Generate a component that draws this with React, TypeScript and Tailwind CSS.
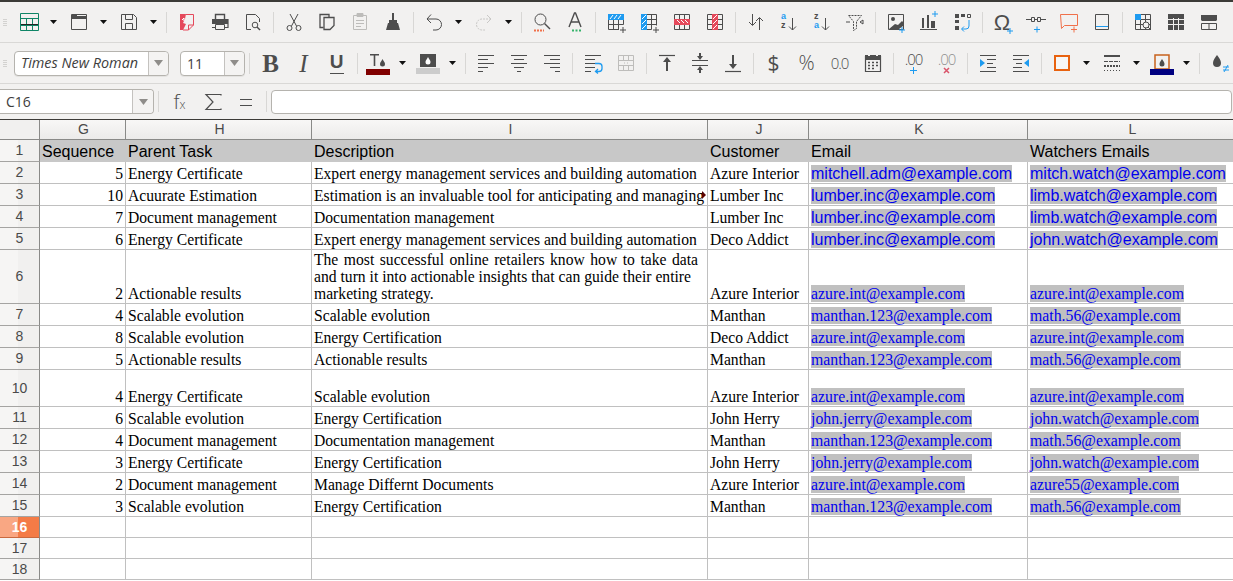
import type { ReactNode } from 'react';

const DARK = '#4d4d4d';
const BLUE = '#1e9bf0';
const RED = '#e5495b';
const ORANGE = '#f0704a';

function Ic({ children }: { children: ReactNode }) {
  return (
    <svg width="24" height="24" viewBox="0 0 24 24" fill="none" stroke={DARK} strokeWidth="1">
      {children}
    </svg>
  );
}

function Tool({ children }: { children?: ReactNode }) {
  return <div className="flex h-full w-[33px] shrink-0 items-center justify-center">{children}</div>;
}

function Drop() {
  return (
    <div className="flex h-full w-[17px] shrink-0 items-center justify-center">
      <svg width="7" height="4" viewBox="0 0 7 4">
        <path d="M0 0h7L3.500 4z" fill="#111" />
      </svg>
    </div>
  );
}

function Sep() {
  return (
    <div className="flex h-full w-[8px] shrink-0 items-center justify-center">
      <div className="h-[21px] w-px bg-[#d8d7d5]" />
    </div>
  );
}

function Handle() {
  return (
    <div className="flex h-full w-[12px] shrink-0 flex-col items-start justify-center gap-[1px] pl-[3px]">
      <div className="h-[1px] w-[4px] bg-[#d3d2d0]" />
      <div className="h-[1px] w-[4px] bg-[#d3d2d0]" />
      <div className="h-[1px] w-[4px] bg-[#d3d2d0]" />
      <div className="h-[1px] w-[4px] bg-[#d3d2d0]" />
    </div>
  );
}

function ComboArrow({ width }: { width: string }) {
  return (
    <div className={`flex h-full shrink-0 items-center justify-center rounded-r-[4px] border-l border-[#c4c2bf] bg-[#f4f3f2] ${width}`}>
      <svg width="9" height="6" viewBox="0 0 9 6">
        <path d="M0 0h9L4.500 6z" fill="#8f8d8a" />
      </svg>
    </div>
  );
}

/* table grid used by the insert/delete icons */
function TableLines({ color = DARK }: { color?: string }) {
  return <path d="M4.500 4.500h15v15h-15zM4.500 9.500h15M4.500 14.500h15M9.500 4.500v15M14.500 4.500v15" stroke={color} />;
}

const icons: Record<string, ReactNode> = {
  sheet: (
    <Ic>
      <path d="M3.500 3.500h18v17h-18zM3.500 8.500h18M9.500 8.500v12M15.500 8.500v12" stroke="#0f8566" />
      <path d="M4 14.500h17" stroke="#222" />
      <path d="M3.500 15.500h18" stroke="#0f8566" />
    </Ic>
  ),
  open: (
    <Ic>
      <path d="M4.500 4.500h15v15h-15z" />
      <path d="M5 4h5v2h10v3H5z" fill={DARK} stroke="none" />
    </Ic>
  ),
  save: (
    <Ic>
      <path d="M4.500 4.500h12l3 3v12h-15zM8.500 4.500v5h7v-5M8.500 19.500v-6h7v6" />
    </Ic>
  ),
  pdf: (
    <Ic>
      <path d="M5 4h6l-1 5-2 4 3 1-3 6H5z" fill={RED} stroke="none" />
      <path d="M11 4.500h7.500v10.500l-5 5H8" stroke={RED} />
      <path d="M13.500 20v-5h5" stroke={RED} />
      <path d="M7 10l2-2v3" stroke="#fff" />
    </Ic>
  ),
  print: (
    <Ic>
      <path d="M7.500 9V4.500h9V9" strokeWidth="1.400" />
      <path d="M4 9.500h16v8h-3.500M7.500 17.500H4z" strokeWidth="1.200" />
      <path d="M4 10h16v4H4z" fill={DARK} stroke="none" />
      <path d="M7.500 14.500h9v5h-9z" />
    </Ic>
  ),
  preview: (
    <Ic>
      <path d="M10 19.500H5.500v-15h9l4 4V12" />
      <circle cx="14" cy="15" r="2.800" />
      <path d="M16 17l3 3" strokeWidth="1.400" />
    </Ic>
  ),
  cut: (
    <Ic>
      <path d="M8 4l6.500 12M16 4L9.500 16" />
      <circle cx="7.500" cy="18" r="2.500" />
      <circle cx="16.500" cy="18" r="2.500" />
    </Ic>
  ),
  copy: (
    <Ic>
      <path d="M8.500 17.500h-3.500v-13h9v2.500" strokeWidth="1.300" />
      <path d="M9 7.500h10v8l-4 4H9z" strokeWidth="1.300" />
    </Ic>
  ),
  paste: (
    <Ic>
      <path d="M5.500 5.500h13v14h-13z" stroke="#bdbcba" />
      <path d="M9 3.500h6v3H9z" fill="#bdbcba" stroke="#bdbcba" />
      <path d="M8 10.500h8M8 13.500h8M8 16.500h5" stroke="#bdbcba" />
    </Ic>
  ),
  clone: (
    <Ic>
      <path d="M12 3v7" strokeWidth="2" />
      <path d="M8 10h8v3H8z" fill={DARK} stroke="none" />
      <path d="M7 13h10l2 7H5z" fill={DARK} stroke="none" />
    </Ic>
  ),
  undo: (
    <Ic>
      <path d="M5 9h9a5 5 0 0 1 0 11h-3" />
      <path d="M9 4.500L5 9l4 4" />
    </Ic>
  ),
  redo: (
    <Ic>
      <path d="M19 9h-9a5 5 0 0 0 0 11h3" stroke="#c9c8c6" strokeDasharray="2 1" />
      <path d="M15 5l4 4-4 4" stroke="#c9c8c6" />
    </Ic>
  ),
  find: (
    <Ic>
      <circle cx="10.500" cy="9.500" r="5.500" />
      <path d="M14.500 13.500L20 19" strokeWidth="1.400" />
      <path d="M4 20.500h10" stroke={ORANGE} strokeWidth="2" strokeDasharray="2 1" />
    </Ic>
  ),
  spell: (
    <Ic>
      <path d="M6 17L11.500 3h1L18 17M8 12h8" strokeWidth="1.400" />
      <path d="M9 20.500h9" stroke="#35b36a" strokeWidth="2" strokeDasharray="2 1.500" />
    </Ic>
  ),
  rowIns: (
    <Ic>
      <path d="M4.500 4.500h15v10M4.500 4.500v15h10M4.500 14.500h15M9.500 10v10M14.500 10v10" />
      <path d="M4 4h16v6H4z" fill={BLUE} stroke="none" />
      <path d="M6 9l3-4M10 9l3-4M14 9l3-4" stroke="#fff" />
      <path d="M16 20h6M19 17v6" />
    </Ic>
  ),
  colIns: (
    <Ic>
      <path d="M4.500 4.500h15v11M4.500 19.500h10M9.500 9.500h10M9.500 14.500h10M14.500 4.500v15" />
      <path d="M4 4h6v16H4z" fill={BLUE} stroke="none" />
      <path d="M5 9l4-4M5 14l4-4M5 19l4-4" stroke="#fff" />
      <path d="M16 20h6M19 17v6" />
    </Ic>
  ),
  rowDel: (
    <Ic>
      <TableLines />
      <path d="M4 9h16v6H4z" fill={RED} stroke="none" />
      <path d="M7 10l3 3M11 10l3 3M15 10l3 3" stroke="#fff" />
    </Ic>
  ),
  colDel: (
    <Ic>
      <TableLines />
      <path d="M9 4h6v16H9z" fill={RED} stroke="none" />
      <path d="M10 9l4-4M10 14l4-4M10 19l4-4" stroke="#fff" />
    </Ic>
  ),
  sort: (
    <Ic>
      <path d="M8.500 4v11M5 12l3.500 3.500L12 12M15.500 20V8M12 11l3.500-3.500L19 11" />
    </Ic>
  ),
  sortAsc: (
    <Ic>
      <text x="4" y="9" fontFamily="Liberation Sans, sans-serif" fontSize="9" fontWeight="700" fill={BLUE} stroke="none">a</text>
      <text x="4" y="18" fontFamily="Liberation Sans, sans-serif" fontSize="9" fontWeight="700" fill={DARK} stroke="none">z</text>
      <path d="M15.500 8v12M12 16.500l3.500 3.500 3.500-3.500" />
    </Ic>
  ),
  sortDesc: (
    <Ic>
      <text x="4" y="9" fontFamily="Liberation Sans, sans-serif" fontSize="9" fontWeight="700" fill={DARK} stroke="none">z</text>
      <text x="4" y="18" fontFamily="Liberation Sans, sans-serif" fontSize="9" fontWeight="700" fill={BLUE} stroke="none">a</text>
      <path d="M15.500 8v12M12 16.500l3.500 3.500 3.500-3.500" />
    </Ic>
  ),
  filter: (
    <Ic>
      <path d="M5.500 5.500h13l-5 6v7l-3 2v-9z" strokeDasharray="2 1" />
      <path d="M3 12h4M17 12l3-2v4z" />
    </Ic>
  ),
  image: (
    <Ic>
      <path d="M4.500 4.500h15v15h-15z" />
      <circle cx="9" cy="9" r="2" fill={DARK} stroke="none" />
      <path d="M5 19l6-5 3 1 4-4 1 1v4l-4 3z" fill={DARK} stroke="none" />
      <path d="M15 20h6M18 17v6" stroke={BLUE} />
    </Ic>
  ),
  chart: (
    <Ic>
      <path d="M5 8h2v10H5zM10 5h2v13h-2zM14 11h4v7h-4z" fill={DARK} stroke="none" />
      <path d="M3 19.500h17" />
      <path d="M15 4h6M18 1v6" stroke={BLUE} />
    </Ic>
  ),
  pivot: (
    <Ic>
      <path d="M5 4h4v4H5zM5 16h4v4H5zM5 10h4v3H5z" fill={DARK} stroke="none" />
      <path d="M11 4h4v3h-4z" fill={DARK} stroke="none" />
      <path d="M17.500 4.500h3v3h-3z" />
      <path d="M19 10v6a3 3 0 0 1-3 3h-4M14 16.500L11.500 19l2.500 2.500" stroke={BLUE} />
    </Ic>
  ),
  omega: (
    <Ic>
      <text x="11" y="20" textAnchor="middle" fontFamily="Liberation Sans, sans-serif" fontSize="22" fill={DARK} stroke="none">Ω</text>
      <path d="M16 21h6M19 18v6" stroke={BLUE} />
    </Ic>
  ),
  link: (
    <Ic>
      <path d="M2 9.500h5M17 9.500h5M7.500 7.500h3v4h-3zM13.500 7.500h3v4h-3zM10 9.500h4" />
      <path d="M10 19.500h6M13 16.500v6" stroke={BLUE} />
    </Ic>
  ),
  note: (
    <Ic>
      <path d="M3.500 4.500h17v11h-13l-3 3z" stroke={ORANGE} />
      <path d="M14 19.500h6M17 16.500v6" stroke={ORANGE} />
    </Ic>
  ),
  headerFooter: (
    <Ic>
      <path d="M5.500 4.500h13v15h-13z" />
      <path d="M6 16.500h12" stroke={BLUE} />
    </Ic>
  ),
  pivotFind: (
    <Ic>
      <path d="M4.500 4.500h15v15h-15zM4.500 9.500h15M4.500 14.500h15M9.500 4.500v15M14.500 4.500v15" />
      <path d="M4 4h6v6H4z" fill={BLUE} stroke="none" />
      <circle cx="15" cy="15" r="3" fill="#f2f1f0" />
      <path d="M17 17l3 3" />
    </Ic>
  ),
  grid: (
    <Ic>
      <path d="M4 4h16v16H4z" fill={DARK} stroke="none" />
      <path d="M9.500 8v12M14.500 8v12M4 9.500h16M4 14.500h16" stroke="#f2f1f0" />
    </Ic>
  ),
  split: (
    <Ic>
      <path d="M4 5h16v5H4z" fill={DARK} stroke="none" />
      <path d="M4.500 13.500h15v6h-15zM12 13.500v6M4.500 10.500h15" />
    </Ic>
  ),
  fontColor: (
    <Ic>
      <path d="M4 3h9v1.500H9.300V15H7.700V4.500H4z" fill={DARK} stroke="none" />
      <path d="M16.500 8c1 2 2.500 3.500 2.500 5a2.500 2.500 0 0 1-5 0c0-1.500 1.500-3 2.500-5z" fill={DARK} stroke="none" />
      <path d="M0 18h24v6H0z" fill="#800000" stroke="none" />
    </Ic>
  ),
  background: (
    <Ic>
      <path d="M4 3h16v13H4z" fill={DARK} stroke="none" />
      <path d="M12 6c1 2 2.500 3.500 2.500 5a2.500 2.500 0 0 1-5 0c0-1.500 1.500-3 2.500-5z" fill="#fff" stroke="none" />
      <path d="M0 17h24v6H0z" fill="#cccccc" stroke="none" />
    </Ic>
  ),
  alignLeft: (
    <Ic>
      <path d="M4 4.500h16M4 8.500h10M4 12.500h16M4 16.500h10M4 20.500h5" />
    </Ic>
  ),
  alignCenter: (
    <Ic>
      <path d="M4 4.500h16M7 8.500h10M4 12.500h16M7 16.500h10M10 20.500h4" />
    </Ic>
  ),
  alignRight: (
    <Ic>
      <path d="M4 4.500h16M10 8.500h10M4 12.500h16M10 16.500h10M15 20.500h5" />
    </Ic>
  ),
  wrap: (
    <Ic>
      <path d="M4 4.500h16M4 8.500h10M4 12.500h10M4 16.500h10M4 20.500h6" />
      <path d="M14 12.500h4a3 3 0 0 1 3 3v2a3 3 0 0 1-3 3h-3M17 18l-2.500 2.500 2.500 2" stroke={BLUE} strokeWidth="1.300" />
    </Ic>
  ),
  merge: (
    <Ic>
      <path d="M4.500 4.500h15v15h-15zM4.500 9.500h15M4.500 14.500h15M9.500 4.500v5M14.500 4.500v5M9.500 14.500v5M14.500 14.500v5M10 12h1M13 12h1" stroke="#bebdbb" />
    </Ic>
  ),
  alignTop: (
    <Ic>
      <path d="M4 4.500h16" strokeWidth="1.200" />
      <path d="M12 6l4 5h-3v9h-2v-9H8z" fill={DARK} stroke="none" />
    </Ic>
  ),
  alignMiddle: (
    <Ic>
      <path d="M4 9.500h16M4 14.500h16" />
      <path d="M12 9L9 5h2V2h2v3h2zM12 15l3 4h-2v3h-2v-3H9z" fill={DARK} stroke="none" />
    </Ic>
  ),
  alignBottom: (
    <Ic>
      <path d="M4 20.500h16" strokeWidth="1.200" />
      <path d="M12 18l-4-5h3V4h2v9h3z" fill={DARK} stroke="none" />
    </Ic>
  ),
  date: (
    <Ic>
      <path d="M4.500 5.500h15v15h-15z" strokeWidth="1.200" />
      <path d="M4 4h3v2h2V4h6v2h2V4h3v5H4z" fill={DARK} stroke="none" />
      <path d="M7 11.500h2M11 11.500h2M15 11.500h2M7 14.500h2M11 14.500h2M15 14.500h2M7 17.500h2M11 17.500h2" strokeWidth="1.600" />
    </Ic>
  ),
  indent: (
    <Ic>
      <path d="M4 4.500h16M11 8.500h9M11 12.500h6M11 16.500h9M4 20.500h16M18 20.500h2" />
      <path d="M4 8v8l5-4z" fill={BLUE} stroke="none" />
    </Ic>
  ),
  outdent: (
    <Ic>
      <path d="M4 4.500h16M4 8.500h9M7 12.500h6M4 16.500h9M4 20.500h16" />
      <path d="M20 8v8l-5-4z" fill={BLUE} stroke="none" />
    </Ic>
  ),
  border: (
    <Ic>
      <path d="M5 5h14v14H5z" stroke="#e8620f" strokeWidth="2" />
      <path d="M6 6h12v12H6z" fill="#f7f6f5" stroke="none" />
    </Ic>
  ),
  borderStyle: (
    <Ic>
      <path d="M4 5h16" strokeWidth="2" />
      <path d="M4 10.500h16" strokeWidth="1" strokeDasharray="4 1" />
      <path d="M4 15h16" strokeWidth="2" strokeDasharray="2 1" />
      <path d="M4 19.500h16" strokeDasharray="1 2" />
    </Ic>
  ),
  borderColor: (
    <Ic>
      <path d="M5 4h14v14H5z" stroke="#c8611d" strokeWidth="1.500" />
      <path d="M12 8c1 2 2.500 3 2.500 5a2.500 2.500 0 0 1-5 0c0-2 1.500-3 2.500-5z" fill={DARK} stroke="none" />
      <path d="M0 18h24v6H0z" fill="#000080" stroke="none" />
    </Ic>
  ),
  conditional: (
    <Ic>
      <path d="M9 4c2 3 4 5 4 8a4 4 0 0 1-8 0c0-3 2-5 4-8z" fill={DARK} stroke="none" />
      <path d="M15 16h6M15 19h6M20 14l-4 7" stroke={BLUE} />
    </Ic>
  ),
  sigma: (
    <Ic>
      <path d="M20 5.500V4.500H5l7 7.500-7 7.500h15v-1" strokeWidth="1.200" />
    </Ic>
  ),
  equals: (
    <Ic>
      <path d="M6 9.500h12M6 15.500h12" strokeWidth="1.200" />
    </Ic>
  ),
};

function Glyph({ className, children }: { className: string; children: ReactNode }) {
  return <span className={`leading-none text-[#4d4d4d] ${className}`}>{children}</span>;
}

function TopToolbar() {
  return (
    <div className="flex h-[41px] items-center border-b border-[#d9d8d6]">
      <Handle />
      <Tool>{icons.sheet}</Tool>
      <Drop />
      <Tool>{icons.open}</Tool>
      <Drop />
      <Tool>{icons.save}</Tool>
      <Drop />
      <Sep />
      <Tool>{icons.pdf}</Tool>
      <Tool>{icons.print}</Tool>
      <Tool>{icons.preview}</Tool>
      <Sep />
      <Tool>{icons.cut}</Tool>
      <Tool>{icons.copy}</Tool>
      <Tool>{icons.paste}</Tool>
      <Tool>{icons.clone}</Tool>
      <Sep />
      <Tool>{icons.undo}</Tool>
      <Drop />
      <Tool>{icons.redo}</Tool>
      <Drop />
      <Sep />
      <Tool>{icons.find}</Tool>
      <Tool>{icons.spell}</Tool>
      <Sep />
      <Tool>{icons.rowIns}</Tool>
      <Tool>{icons.colIns}</Tool>
      <Tool>{icons.rowDel}</Tool>
      <Tool>{icons.colDel}</Tool>
      <Sep />
      <Tool>{icons.sort}</Tool>
      <Tool>{icons.sortAsc}</Tool>
      <Tool>{icons.sortDesc}</Tool>
      <Tool>{icons.filter}</Tool>
      <Sep />
      <Tool>{icons.image}</Tool>
      <Tool>{icons.chart}</Tool>
      <Tool>{icons.pivot}</Tool>
      <Sep />
      <Tool>{icons.omega}</Tool>
      <Tool>{icons.link}</Tool>
      <Tool>{icons.note}</Tool>
      <Tool>{icons.headerFooter}</Tool>
      <Sep />
      <Tool>{icons.pivotFind}</Tool>
      <Tool>{icons.grid}</Tool>
      <Tool>{icons.split}</Tool>
    </div>
  );
}

function FormatToolbar() {
  return (
    <div className="flex h-[41px] items-center overflow-hidden border-b border-[#d9d8d6]">
      <Handle />
      <div className="ml-[2px] flex h-[25px] w-[155px] shrink-0 items-center rounded-[4px] border border-[#b5b3ae] bg-white shadow-[0_1px_0_#e4e3e1]">
        <span className="flex-1 truncate pl-[6px] font-['Open_Sans',sans-serif] text-[14.4px] italic text-[#3d3d3d]">Times New Roman</span>
        <ComboArrow width="w-[20px]" />
      </div>
      <div className="ml-[11px] flex h-[25px] w-[65px] shrink-0 items-center rounded-[4px] border border-[#b5b3ae] bg-white shadow-[0_1px_0_#e4e3e1]">
        <span className="flex-1 pl-[6px] font-['Open_Sans',sans-serif] text-[14px] text-[#3d3d3d]">11</span>
        <ComboArrow width="w-[20px]" />
      </div>
      <div className="flex h-full w-[9px] shrink-0 items-center justify-center">
        <div className="h-[21px] w-px bg-[#d8d7d5]" />
      </div>
      <Tool><Glyph className="font-['Liberation_Serif',serif] text-[25px] font-bold">B</Glyph></Tool>
      <Tool><Glyph className="font-['Liberation_Serif',serif] text-[25px] italic">I</Glyph></Tool>
      <Tool>
        <div className="flex flex-col items-center">
          <Glyph className="font-['Liberation_Sans',sans-serif] text-[19px] font-bold">U</Glyph>
          <div className="mt-[2px] h-px w-[14px] bg-[#4d4d4d]" />
        </div>
      </Tool>
      <Sep />
      <Tool>{icons.fontColor}</Tool>
      <Drop />
      <Tool>{icons.background}</Tool>
      <Drop />
      <Sep />
      <Tool>{icons.alignLeft}</Tool>
      <Tool>{icons.alignCenter}</Tool>
      <Tool>{icons.alignRight}</Tool>
      <Sep />
      <Tool>{icons.wrap}</Tool>
      <Tool>{icons.merge}</Tool>
      <Sep />
      <Tool>{icons.alignTop}</Tool>
      <Tool>{icons.alignMiddle}</Tool>
      <Tool>{icons.alignBottom}</Tool>
      <Sep />
      <Tool><Glyph className="font-['Open_Sans',sans-serif] text-[21px]">$</Glyph></Tool>
      <Tool><Glyph className="font-['Open_Sans',sans-serif] text-[20px] font-light">%</Glyph></Tool>
      <Tool><Glyph className="font-['Open_Sans',sans-serif] text-[15px] font-light tracking-[-1px]">0.0</Glyph></Tool>
      <Tool>{icons.date}</Tool>
      <Sep />
      <Tool>
        <div className="flex flex-col items-center">
          <Glyph className="font-['Open_Sans',sans-serif] text-[15px] font-light tracking-[-1px]">.00</Glyph>
          <svg width="7" height="7" viewBox="0 0 7 7" stroke={BLUE}>
            <path d="M0 3.500h7M3.500 0v7" />
          </svg>
        </div>
      </Tool>
      <Tool>
        <div className="flex flex-col items-center">
          <Glyph className="font-['Open_Sans',sans-serif] text-[15px] font-light tracking-[-1px] opacity-60">.00</Glyph>
          <svg width="7" height="7" viewBox="0 0 7 7" stroke="#d9546a" strokeWidth="1.500">
            <path d="M1 1l5 5M6 1L1 6" />
          </svg>
        </div>
      </Tool>
      <Sep />
      <Tool>{icons.indent}</Tool>
      <Tool>{icons.outdent}</Tool>
      <Sep />
      <Tool>{icons.border}</Tool>
      <Drop />
      <Tool>{icons.borderStyle}</Tool>
      <Drop />
      <Tool>{icons.borderColor}</Tool>
      <Drop />
      <Sep />
      <Tool>{icons.conditional}</Tool>
    </div>
  );
}

function FormulaBar() {
  return (
    <div className="flex h-[36px] items-center border-b border-[#3c3b37]">
      <div className="flex h-[25px] w-[154px] shrink-0 items-center rounded-r-[4px] border border-l-0 border-[#b5b3ae] bg-white">
        <span className="flex-1 pl-[6px] font-['Open_Sans',sans-serif] text-[14px] text-[#3d3d3d]">C16</span>
        <ComboArrow width="w-[21px]" />
      </div>
      <div className="flex h-full w-[9px] shrink-0 items-center justify-center">
        <div className="h-[21px] w-px bg-[#d8d7d5]" />
      </div>
      <Tool>
        <span className="font-['Open_Sans',sans-serif] text-[20px] leading-none font-light text-[#4d4d4d]">f<span className="text-[12px]">x</span></span>
      </Tool>
      <Tool>{icons.sigma}</Tool>
      <Tool>{icons.equals}</Tool>
      <Sep />
      <div className="ml-px h-[24px] w-[961px] shrink-0 rounded-[4px] border border-[#b5b3ae] bg-white" />
    </div>
  );
}

type Row = {
  n: number;
  h: string;
  seq?: string;
  task?: string;
  desc?: ReactNode;
  customer?: string;
  email?: string;
  watch?: string;
  big?: boolean;
};

const rows: Row[] = [
  { n: 2, h: 'h-[22px]', seq: '5', task: 'Energy Certificate', desc: 'Expert energy management services and building automation', customer: 'Azure Interior', email: 'mitchell.adm@example.com', watch: 'mitch.watch@example.com', big: true },
  { n: 3, h: 'h-[22px]', seq: '10', task: 'Acuurate Estimation', desc: 'Estimation is an invaluable tool for anticipating and managing', customer: 'Lumber Inc', email: 'lumber.inc@example.com', watch: 'limb.watch@example.com', big: true },
  { n: 4, h: 'h-[22px]', seq: '7', task: 'Document management', desc: 'Documentation management', customer: 'Lumber Inc', email: 'lumber.inc@example.com', watch: 'limb.watch@example.com', big: true },
  { n: 5, h: 'h-[22px]', seq: '6', task: 'Energy Certificate', desc: 'Expert energy management services and building automation', customer: 'Deco Addict', email: 'lumber.inc@example.com', watch: 'john.watch@example.com', big: true },
  {
    n: 6,
    h: 'h-[54px]',
    seq: '2',
    task: 'Actionable results',
    desc: (
      <>
        <span className="[word-spacing:1.6px]">The most successful online retailers know how to take data</span>
        <br />
        and turn it into actionable insights that can guide their entire
        <br />
        marketing strategy.
      </>
    ),
    customer: 'Azure Interior',
    email: 'azure.int@example.com',
    watch: 'azure.int@example.com',
  },
  { n: 7, h: 'h-[22px]', seq: '4', task: 'Scalable evolution', desc: 'Scalable evolution', customer: 'Manthan', email: 'manthan.123@example.com', watch: 'math.56@example.com' },
  { n: 8, h: 'h-[22px]', seq: '8', task: 'Scalable evolution', desc: 'Energy Certification', customer: 'Deco Addict', email: 'azure.int@example.com', watch: 'azure.int@example.com' },
  { n: 9, h: 'h-[22px]', seq: '5', task: 'Actionable results', desc: 'Actionable results', customer: 'Manthan', email: 'manthan.123@example.com', watch: 'math.56@example.com' },
  { n: 10, h: 'h-[37px]', seq: '4', task: 'Energy Certificate', desc: 'Scalable evolution', customer: 'Azure Interior', email: 'azure.int@example.com', watch: 'azure.int@example.com' },
  { n: 11, h: 'h-[22px]', seq: '6', task: 'Scalable evolution', desc: 'Energy Certification', customer: 'John Herry', email: 'john.jerry@example.com', watch: 'john.watch@example.com' },
  { n: 12, h: 'h-[22px]', seq: '4', task: 'Document management', desc: 'Documentation management', customer: 'Manthan', email: 'manthan.123@example.com', watch: 'math.56@example.com' },
  { n: 13, h: 'h-[22px]', seq: '3', task: 'Energy Certificate', desc: 'Energy Certification', customer: 'John Herry', email: 'john.jerry@example.com', watch: 'john.watch@example.com' },
  { n: 14, h: 'h-[22px]', seq: '2', task: 'Document management', desc: 'Manage Differnt Documents', customer: 'Azure Interior', email: 'azure.int@example.com', watch: 'azure55@example.com' },
  { n: 15, h: 'h-[22px]', seq: '3', task: 'Scalable evolution', desc: 'Energy Certification', customer: 'Manthan', email: 'manthan.123@example.com', watch: 'math.56@example.com' },
  { n: 16, h: 'h-[21px]' },
  { n: 17, h: 'h-[21px]' },
  { n: 18, h: 'h-[21px]' },
];

const colW = ['w-[86px]', 'w-[186px]', 'w-[396px]', 'w-[101px]', 'w-[219px]', 'w-[208px]'];
const colNames = ['G', 'H', 'I', 'J', 'K', 'L'];
const headings = ['Sequence', 'Parent Task', 'Description', 'Customer', 'Email', 'Watchers Emails'];

function RowHead({ n, h }: { n: number; h: string }) {
  const active = n === 16;
  return (
    <div className={`relative flex w-[40px] shrink-0 items-center justify-center border-r border-b border-r-[#8a8a88] font-['Liberation_Sans',sans-serif] text-[14px] ${h} ${active ? 'border-b-[#c9693f] bg-[#f47b46] font-bold text-white' : 'border-b-[#a5a4a2] bg-[#f1f0ef] text-[#4a4a4a]'}`}>
      <div className={`absolute inset-y-0 left-0 w-[18px] ${active ? 'bg-[#f9a783]' : 'bg-[#f6f5f4]'}`} />
      <span className="relative">{n}</span>
    </div>
  );
}

function Cell({ w, h, className, children }: { w: string; h: string; className?: string; children?: ReactNode }) {
  return (
    <div className={`relative flex shrink-0 items-end overflow-hidden whitespace-nowrap border-r border-b border-[#c0c0c0] px-[2px] pb-[1px] ${w} ${h} ${className ?? ''}`}>
      {children}
    </div>
  );
}

function Mail({ text, big }: { text?: string; big?: boolean }) {
  if (!text) return null;
  return (
    <span className={`bg-[#c0c0c0] text-[#0000ee] ${big ? "font-['Liberation_Sans',sans-serif] text-[16px] leading-[17px]" : "font-['Liberation_Serif',serif] text-[15.8px] leading-[17px]"}`}>
      {text}
    </span>
  );
}

function Sheet() {
  return (
    <div className="flex-1 overflow-hidden bg-white font-['Liberation_Serif',serif] text-[15.65px] leading-[17px] text-black">
      <div className="flex h-[20px] border-b border-[#8a8a88]">
        <div className="w-[40px] shrink-0 border-r border-[#8a8a88] bg-[#f1f0ef]" />
        {colNames.map((c, i) => (
          <div key={c} className={`flex shrink-0 items-center justify-center border-r border-[#8a8a88] bg-gradient-to-b from-[#f8f7f6] to-[#ecebea] pl-[2px] font-['Liberation_Sans',sans-serif] text-[14px] text-[#4a4a4a] ${colW[i]}`}>
            {c}
          </div>
        ))}
      </div>

      <div className="flex h-[22px]">
        <RowHead n={1} h="h-[22px]" />
        {headings.map((t, i) => (
          <div key={t} className={`flex shrink-0 items-end whitespace-nowrap bg-[#c8c8c8] px-[2px] font-['Liberation_Sans',sans-serif] text-[16px] leading-[20px] ${colW[i]}`}>
            {t}
          </div>
        ))}
      </div>

      {rows.map((r) => (
        <div key={r.n} className="flex">
          <RowHead n={r.n} h={r.h} />
          <Cell w={colW[0]} h={r.h} className="justify-end">{r.seq}</Cell>
          <Cell w={colW[1]} h={r.h}>{r.task}</Cell>
          <Cell w={colW[2]} h={r.h}>
            <span>{r.desc}</span>
            {r.n === 3 && (
              <div className="absolute right-[1px] top-[7px] h-0 w-0 border-y-[4px] border-l-[4px] border-y-transparent border-l-[#5a0000]" />
            )}
          </Cell>
          <Cell w={colW[3]} h={r.h}>{r.customer}</Cell>
          <Cell w={colW[4]} h={r.h}><Mail text={r.email} big={r.big} /></Cell>
          <Cell w={colW[5]} h={r.h}><Mail text={r.watch} big={r.big} /></Cell>
        </div>
      ))}
    </div>
  );
}

export default function App() {
  return (
    <div className="flex h-[581px] w-[1233px] flex-col overflow-hidden bg-[#f2f1f0]">
      <div className="h-[2px] shrink-0 bg-[#3c3b37]" />
      <TopToolbar />
      <FormatToolbar />
      <FormulaBar />
      <Sheet />
    </div>
  );
}
